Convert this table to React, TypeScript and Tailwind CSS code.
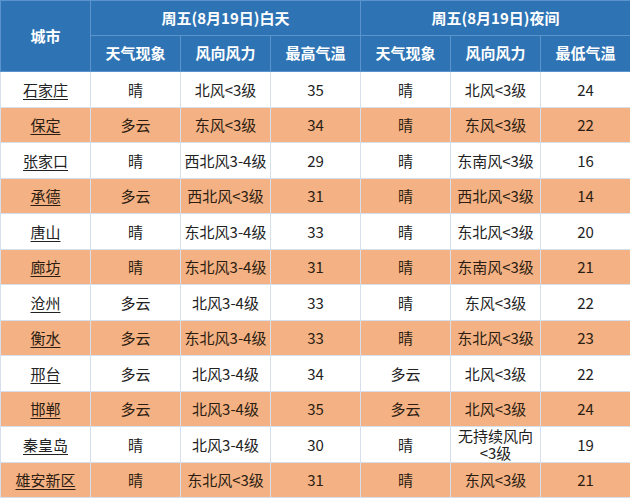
const rows: [string, string, string, string, string, string, string][] = [
  ['石家庄', '晴', '北风<3级', '35', '晴', '北风<3级', '24'],
  ['保定', '多云', '东风<3级', '34', '晴', '东风<3级', '22'],
  ['张家口', '晴', '西北风3-4级', '29', '晴', '东南风<3级', '16'],
  ['承德', '多云', '西北风<3级', '31', '晴', '西北风<3级', '14'],
  ['唐山', '晴', '东北风3-4级', '33', '晴', '东北风<3级', '20'],
  ['廊坊', '晴', '东北风3-4级', '31', '晴', '东南风<3级', '21'],
  ['沧州', '多云', '北风3-4级', '33', '晴', '东风<3级', '22'],
  ['衡水', '多云', '东北风3-4级', '33', '晴', '东北风<3级', '23'],
  ['邢台', '多云', '北风3-4级', '34', '多云', '北风<3级', '22'],
  ['邯郸', '多云', '北风3-4级', '35', '多云', '北风<3级', '24'],
  ['秦皇岛', '晴', '北风3-4级', '30', '晴', '无持续风向\n<3级', '19'],
  ['雄安新区', '晴', '东北风<3级', '31', '晴', '东风<3级', '21'],
];

const head = 'border border-[#5b93cc] bg-[#2e74b5] text-white font-bold text-[15px] text-center';

export default function App() {
  return (
    <div className="w-[630px] h-[500px] bg-white overflow-hidden" style={{ fontFamily: '"Noto Sans CJK SC", "Noto Sans", sans-serif' }}>
      <table className="w-[630px] table-fixed border-collapse">
        <colgroup>
          {[0, 1, 2, 3, 4, 5, 6].map((i) => (
            <col key={i} className="w-[90px]" />
          ))}
        </colgroup>
        <thead>
          <tr className="h-[35px]">
            <th rowSpan={2} className={head}>城市</th>
            <th colSpan={3} className={head}>周五(8月19日)白天</th>
            <th colSpan={3} className={head}>周五(8月19日)夜间</th>
          </tr>
          <tr className="h-[36px]">
            <th className={head}>天气现象</th>
            <th className={head}>风向风力</th>
            <th className={head}>最高气温</th>
            <th className={head}>天气现象</th>
            <th className={head}>风向风力</th>
            <th className={head}>最低气温</th>
          </tr>
        </thead>
        <tbody>
          {rows.map((r, i) => (
            <tr key={r[0]} className={i % 2 === 1 ? 'h-[35.5px] bg-[#f4b183] text-[#2b1d12]' : 'h-[35.5px] bg-white text-[#222]'}>
              {r.map((c, j) => (
                <td
                  key={j}
                  className={
                    'border border-[#d5e0ec] text-center text-[15px] leading-[17px] p-0 whitespace-pre-line' +
                    (j === 0 ? ' underline underline-offset-[3px]' : '')
                  }
                >
                  {c}
                </td>
              ))}
            </tr>
          ))}
        </tbody>
      </table>
    </div>
  );
}
